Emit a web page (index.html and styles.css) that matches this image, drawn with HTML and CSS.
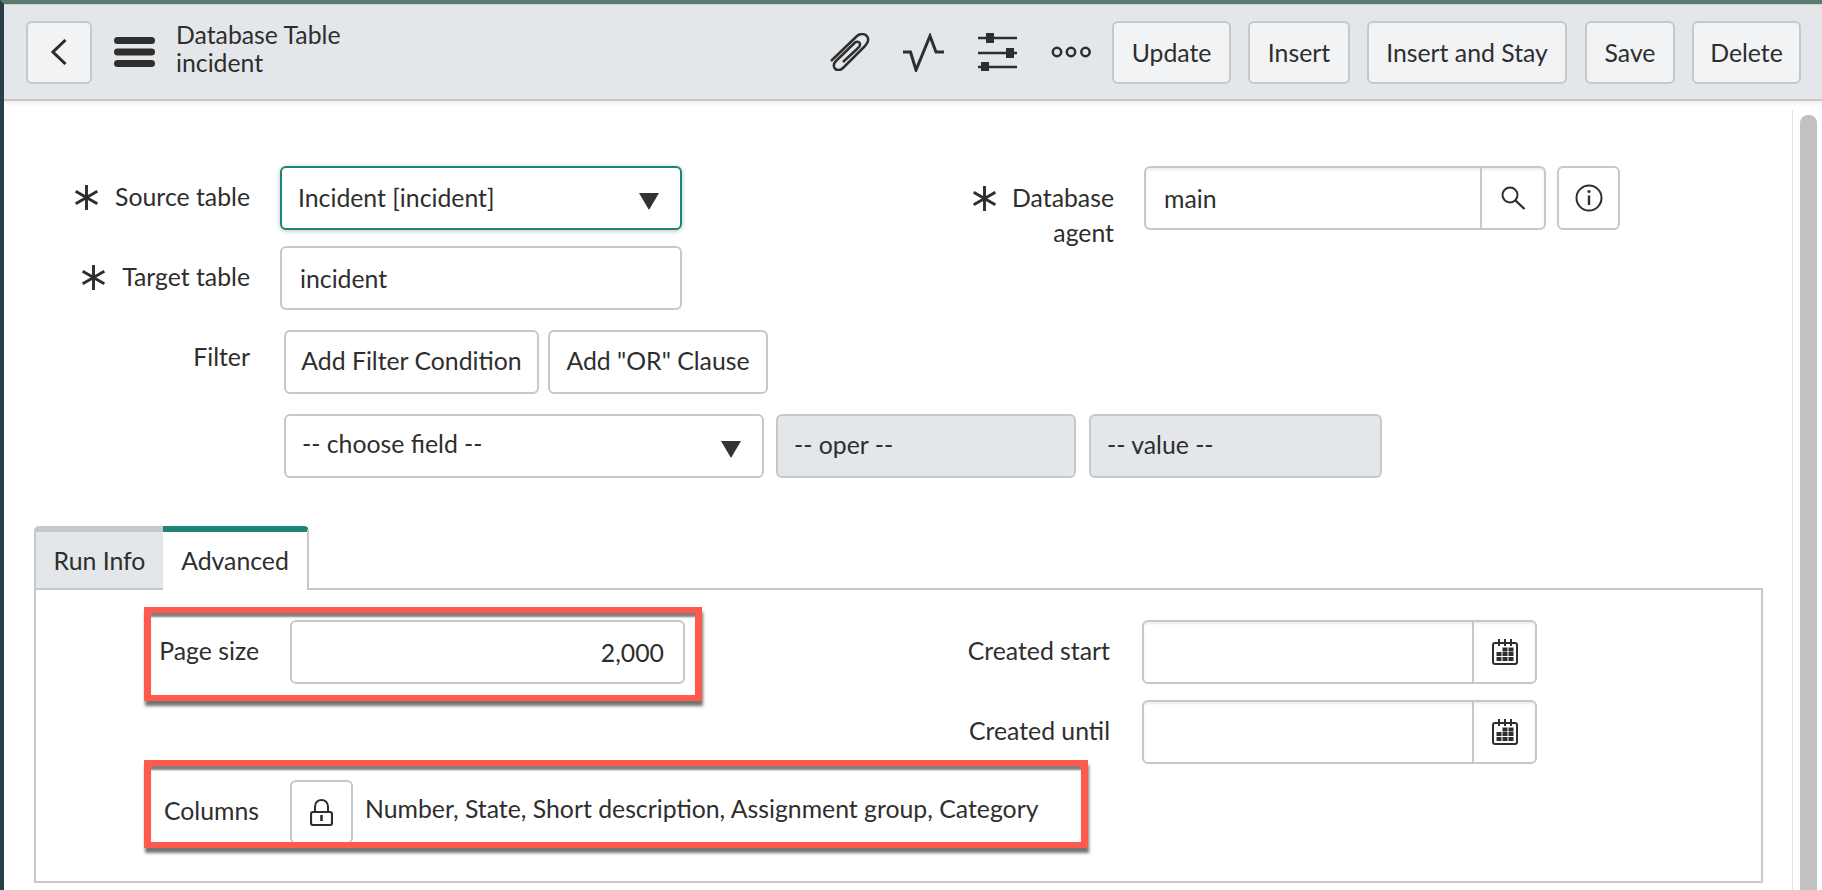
FILE: index.html
```html
<!DOCTYPE html>
<html lang="en">
<head>
    <meta charset="UTF-8">
    <meta name="viewport" content="width=device-width, initial-scale=1.0">
    <title>Database Table - incident</title>
    <link rel="stylesheet" href="styles.css">
</head>
<body>
    <svg class="defs" width="0" height="0">
        <symbol id="star" viewBox="0 0 24 24"><path d="M12 0V24M1.600 6L22.400 18M22.400 6L1.600 18" fill="none" stroke="currentColor" stroke-width="2.800"/></symbol>
        <symbol id="arrow" viewBox="0 0 20 17"><path d="M0 0H20L10 17Z" fill="currentColor"/></symbol>
        <symbol id="calendar" viewBox="0 0 26 26">
            <rect x="1" y="4" width="24" height="21" rx="2" fill="none" stroke="currentColor" stroke-width="2"/>
            <path d="M6 0H8V7H6ZM12 0H14V7H12ZM18 0H20V7H18Z" fill="currentColor"/>
            <path d="M4.500 13h5v4h-5zM4.500 18h5v4h-5zM10.500 8.500h5v4h-5zM10.500 13h5v4h-5zM10.500 18h5v4h-5zM16.500 8.500h5v4h-5zM16.500 13h5v4h-5zM16.500 18h5v4h-5z" fill="currentColor"/>
        </symbol>
    </svg>

    <div class="page">
        <header class="topbar">
            <button class="back-btn" type="button">
                <svg width="16" height="26" viewBox="0 0 16 26"><path d="M14.500 1L2 13L14.500 25" fill="none" stroke="currentColor" stroke-width="3"/></svg>
            </button>
            <svg class="menu-icon" width="41" height="30" viewBox="0 0 41 30"><path d="M3.500 3.500H37.500M3.500 15H37.500M3.500 26.500H37.500" stroke="currentColor" stroke-width="7" stroke-linecap="round"/></svg>
            <div class="title">
                <div>Database Table</div>
                <div>incident</div>
            </div>
            <div class="actions">
                <svg class="clip-icon" width="40" height="38" viewBox="0 0 40 38"><path d="M1 28L27 3C31 -0.500 36 1 37.500 4C39 7 38 10 35 13L13 35C10 38 6 37.500 4.500 35C3 32 4 30 6 28L25 9.500C27 8 30 9 30 11C30.500 13 29 14 27 16L13 29" fill="none" stroke="currentColor" stroke-width="2.500"/></svg>
                <svg class="pulse-icon" width="41" height="39" viewBox="0 0 41 39"><path d="M0 19H7.500L13 37L27 3L33 19H41" fill="none" stroke="currentColor" stroke-width="3"/></svg>
                <svg class="tune-icon" width="39" height="38" viewBox="0 0 39 38">
                    <path d="M0 5H39M0 20H39M0 34H39" stroke="currentColor" stroke-width="2.500"/>
                    <path d="M8 0H16V10H8ZM28 15H36V25H28ZM3 29H11V38H3Z" fill="currentColor"/>
                </svg>
                <svg class="more-icon" width="41" height="12" viewBox="0 0 41 12">
                    <g fill="none" stroke="currentColor" stroke-width="2.500"><circle cx="6" cy="6" r="4.200"/><circle cx="20" cy="6" r="4.200"/><circle cx="34.500" cy="6" r="4.200"/></g>
                </svg>
                <button class="top-btn w-update" type="button">Update</button>
                <button class="top-btn w-insert" type="button">Insert</button>
                <button class="top-btn w-stay" type="button">Insert and Stay</button>
                <button class="top-btn w-save" type="button">Save</button>
                <button class="top-btn w-delete" type="button">Delete</button>
            </div>
        </header>

        <div class="body">
            <main class="content">
                <div class="row">
                    <label class="lbl lbl-main"><svg class="star"><use href="#star"/></svg>Source table</label>
                    <div class="box select focused">Incident [incident]<svg class="arrow"><use href="#arrow"/></svg></div>
                    <label class="lbl lbl-agent"><svg class="star star-agent"><use href="#star"/></svg>Database agent</label>
                    <div class="box group agent">
                        <span class="group-text">main</span>
                        <span class="addon">
                            <svg width="25" height="24" viewBox="0 0 25 24"><circle cx="9" cy="9" r="7.500" fill="none" stroke="currentColor" stroke-width="2"/><path d="M14.500 14.500L23.500 23" stroke="currentColor" stroke-width="2.400"/></svg>
                        </span>
                    </div>
                    <button class="box info-btn" type="button">
                        <svg width="28" height="28" viewBox="0 0 28 28"><circle cx="14" cy="14" r="12.500" fill="none" stroke="currentColor" stroke-width="2"/><path d="M14 11.500V21" stroke="currentColor" stroke-width="2.400"/><circle cx="14" cy="7.500" r="1.600" fill="currentColor"/></svg>
                    </button>
                </div>
                <div class="row row-target">
                    <label class="lbl lbl-main"><svg class="star"><use href="#star"/></svg>Target table</label>
                    <input class="box text-input w-target" value="incident">
                </div>
                <div class="row filter-row">
                    <label class="lbl lbl-main lbl-filter">Filter</label>
                    <button class="box plain-btn w-cond" type="button">Add Filter Condition</button>
                    <button class="box plain-btn w-or" type="button">Add "OR" Clause</button>
                </div>
                <div class="row cond-row">
                    <div class="box select w-field">-- choose field --<svg class="arrow"><use href="#arrow"/></svg></div>
                    <div class="box off w-oper">-- oper --</div>
                    <div class="box off w-value">-- value --</div>
                </div>

                <div class="tabs">
                    <div class="tab">Run Info</div>
                    <div class="tab active">Advanced</div>
                </div>
                <section class="panel">
                    <div class="panel-col col-left">
                        <div class="panel-row">
                            <label class="lbl lbl-panel">Page size</label>
                            <input class="box text-input num w-page" value="2,000">
                        </div>
                        <div class="panel-row columns-row">
                            <label class="lbl lbl-panel">Columns</label>
                            <button class="box lock-btn" type="button">
                                <svg width="23" height="27" viewBox="0 0 23 27"><path d="M5 13V7.500C5 3.500 8 1 11.500 1C15 1 18 3.500 18 7.500V13" fill="none" stroke="currentColor" stroke-width="2"/><rect x="1" y="13" width="21" height="13" rx="2" fill="none" stroke="currentColor" stroke-width="2.200"/><path d="M10.200 16H12.800V22H10.200Z" fill="currentColor"/></svg>
                            </button>
                            <span class="col-list">Number, State, Short description, Assignment group, Category</span>
                        </div>
                    </div>
                    <div class="panel-col col-right">
                        <div class="panel-row">
                            <label class="lbl lbl-created">Created start</label>
                            <div class="box group created">
                                <span class="group-text"></span>
                                <span class="addon"><svg class="cal"><use href="#calendar"/></svg></span>
                            </div>
                        </div>
                        <div class="panel-row">
                            <label class="lbl lbl-created">Created until</label>
                            <div class="box group created">
                                <span class="group-text"></span>
                                <span class="addon"><svg class="cal"><use href="#calendar"/></svg></span>
                            </div>
                        </div>
                    </div>
                    <!-- annotation frames drawn over the form -->
                    <div class="mark mark-page"></div>
                    <div class="mark mark-columns"></div>
                </section>
            </main>
            <div class="scroll-track"><div class="scroll-thumb"></div></div>
        </div>
    </div>
</body>
</html>
```
FILE: styles.css
```css
* {
    box-sizing: border-box;
}
html, body {
    margin: 0;
    padding: 0;
    height: 100%;
    overflow: hidden;
}
body {
    font-family: Lato, "Open Sans", sans-serif;
    font-size: 24.8px;
    color: #2e2e2e;
    background-color: #fff;
}
button, input {
    font: inherit;
    color: inherit;
}
.defs {
    position: absolute;
}

.page {
    height: 890px;
    display: flex;
    flex-direction: column;
    border-top: 4px solid #5b7c6e;
    border-left: 4px solid #2a4048;
}

/* header */
.topbar {
    flex: none;
    height: 97px;
    display: flex;
    align-items: center;
    background-color: #e4e7ea;
    border-top: 1px solid #c9d8d3;
    border-bottom: 2px solid #c8c8c8;
    box-shadow: 0 2px 5px rgba(0, 0, 0, 0.08);
    padding: 0 21px 0 22px;
    position: relative;
    z-index: 1;
}
.back-btn {
    width: 66px;
    height: 63px;
    display: flex;
    align-items: center;
    justify-content: center;
    background-color: #f1f3f5;
    border: 2px solid #c8c8c8;
    border-radius: 6px;
    padding: 0;
}
.menu-icon {
    margin-left: 22px;
}
.title {
    margin-left: 21px;
    line-height: 28px;
    margin-top: -7px;
}
.actions {
    margin-left: auto;
    display: flex;
    align-items: center;
}
.clip-icon { margin-right: 33px; }
.pulse-icon { margin-right: 34px; }
.tune-icon { margin-right: 34px; }
.more-icon { margin-right: 20px; }
.top-btn {
    height: 63px;
    background-color: #f1f3f5;
    border: 2px solid #c8c8c8;
    border-radius: 6px;
    padding: 0;
    margin-left: 17px;
}
.more-icon + .top-btn {
    margin-left: 0;
}
.w-update { width: 119px; }
.w-insert { width: 102px; }
.w-stay { width: 200px; }
.w-save { width: 90px; margin-left: 18px; }
.w-delete { width: 109px; }

/* form */
.body {
    flex: 1;
    display: flex;
    min-height: 0;
}
.content {
    flex: 1;
    padding-top: 65px;
}
.scroll-track {
    flex: none;
    width: 30px;
    margin-top: 9px;
    padding: 5px 5px 0 7px;
    border-left: 1px solid #e4e4e4;
}
.scroll-thumb {
    height: 100%;
    background-color: #c1c1c1;
    border-radius: 8px 8px 0 0;
}

.row {
    display: flex;
    height: 64px;
    margin-bottom: 16px;
}
.row-target {
    margin-bottom: 20px;
}
.filter-row {
    margin-bottom: 20px;
}
.cond-row {
    padding-left: 280px;
}
.lbl {
    display: block;
    flex: none;
    text-align: right;
    line-height: 35px;
    white-space: nowrap;
}
.lbl-main {
    position: relative;
    width: 246px;
    margin-right: 30px;
    padding-top: 13px;
}
.lbl-filter {
    padding-top: 9px;
    margin-right: 34px;
}
.star {
    width: 25px;
    height: 25px;
    margin-right: 16px;
    vertical-align: -4px;
}
.lbl-agent {
    width: 432px;
    margin-right: 30px;
    padding-top: 14px;
    padding-left: 295px;
    white-space: normal;
    position: relative;
}
.star-agent {
    position: absolute;
    left: 290px;
    top: 20px;
    margin: 0;
}

.box {
    flex: none;
    height: 64px;
    background-color: #fff;
    border: 2px solid #c8c8c8;
    border-radius: 6px;
}
.select {
    width: 402px;
    display: flex;
    align-items: center;
    justify-content: space-between;
    padding: 0 21px 0 16px;
    line-height: 1;
}
.focused {
    border-color: #1f8476;
    box-shadow: 0 1px 5px rgba(0, 0, 0, 0.25);
}
.arrow {
    width: 20px;
    height: 17px;
    margin-top: 6px;
    color: #333;
}
.text-input {
    padding: 0 17px 0 18px;
    outline: none;
}
.w-target { width: 402px; }
.group {
    display: flex;
    align-items: stretch;
    overflow: hidden;
    box-shadow: inset 0 2px 3px rgba(0, 0, 0, 0.08);
}
.group-text {
    flex: 1;
    display: flex;
    align-items: center;
    padding-left: 18px;
}
.addon {
    flex: none;
    display: flex;
    align-items: center;
    justify-content: center;
    border-left: 2px solid #c8c8c8;
}
.agent { width: 402px; }
.agent .addon { width: 64px; }
.info-btn {
    width: 63px;
    margin-left: 11px;
    padding: 0;
    display: flex;
    align-items: center;
    justify-content: center;
}
.plain-btn {
    padding: 0 0 3px;
    margin-right: 9px;
}
.w-cond { width: 255px; }
.w-or { width: 220px; }
.w-field { width: 480px; margin-right: 12px; padding-bottom: 3px; }
.w-field .arrow { margin-top: 9px; }
.off {
    display: flex;
    align-items: center;
    padding: 0 0 3px 16px;
    background-color: #e4e7ea;
}
.w-oper { width: 300px; margin-right: 13px; }
.w-value { width: 293px; }

/* tabs */
.tabs {
    display: flex;
    height: 64px;
    margin: 48px 0 0 30px;
}
.tab {
    width: 129px;
    padding-top: 11px;
    line-height: 36px;
    text-align: center;
    background-color: #e4e7ea;
    border-top: 6px solid #c8c8c8;
    border-left: 2px solid #c8c8c8;
    border-bottom: 2px solid #c8c8c8;
    border-radius: 5px 0 0 0;
}
.tab.active {
    width: 146px;
    height: 64px;
    background-color: #fff;
    border-top-color: #1f8476;
    border-left: none;
    border-right: 2px solid #c8c8c8;
    border-bottom: none;
    border-radius: 0 5px 0 0;
    position: relative;
    z-index: 1;
}
.panel {
    position: relative;
    width: 1729px;
    height: 295px;
    margin: -2px 0 0 30px;
    padding: 30px 0 0 0;
    display: flex;
    border: 2px solid #c8c8c8;
}
.panel-col {
    display: flex;
    flex-direction: column;
}
.col-left {
    flex: none;
    width: 855px;
}
.panel-row {
    display: flex;
    height: 64px;
}
.col-right .panel-row {
    margin-bottom: 16px;
}
.lbl-panel {
    width: 223px;
    margin-right: 31px;
    padding-top: 13px;
}
.lbl-created {
    width: 219px;
    margin-right: 32px;
    padding-top: 13px;
}
.w-page { width: 395px; }
.num { text-align: right; padding-right: 19px; }
.columns-row {
    margin-top: 96px;
}
.columns-row .lbl-panel {
    padding-top: 13px;
}
.lock-btn {
    width: 63px;
    padding: 0;
    display: flex;
    align-items: center;
    justify-content: center;
}
.col-list {
    margin-left: 12px;
    line-height: 58px;
    white-space: nowrap;
}
.created { width: 395px; box-shadow: inset 0 2px 2px rgba(0, 0, 0, 0.08); }
.created .addon { width: 63px; }
.cal {
    width: 26px;
    height: 26px;
}

/* red frames */
.mark {
    position: absolute;
    left: 108px;
    border-style: solid;
    border-color: #ff5a4d;
    border-width: 6px 7px;
    box-shadow: 1px 5px 3px rgba(0, 0, 0, 0.55), inset 0 5px 2px -1px rgba(0, 0, 0, 0.5);
}
.mark-page {
    top: 17px;
    width: 558px;
    height: 94px;
}
.mark-columns {
    top: 170px;
    width: 944px;
    height: 88px;
}
```
